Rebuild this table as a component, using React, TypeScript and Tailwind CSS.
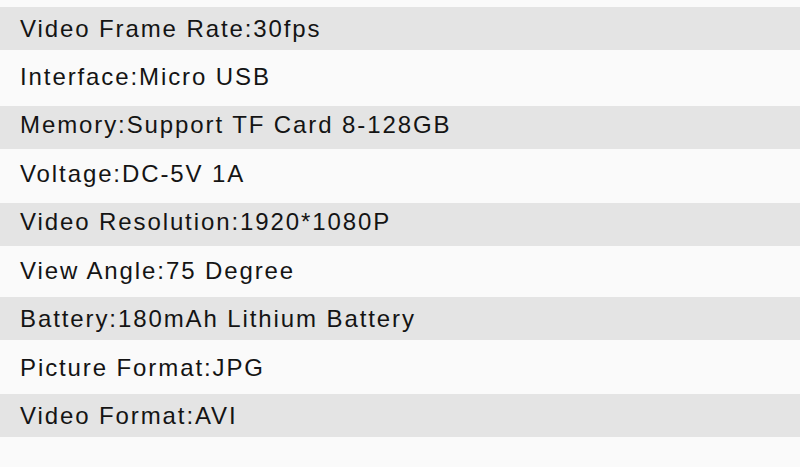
// spec rows, top to bottom; the source image's stripes aren't perfectly even,
// so each row carries its own height and a small nudge for the text
const specs = [
  { text: "Video Frame Rate:30fps", cls: "h-[43px] bg-[#e4e4e4]" },
  { text: "Interface:Micro USB", cls: "h-[56px] pb-[3px]" },
  { text: "Memory:Support TF Card 8-128GB", cls: "h-[43px] bg-[#e4e4e4] pb-[5px]" },
  { text: "Voltage:DC-5V 1A", cls: "h-[54px] pb-[5px]" },
  { text: "Video Resolution:1920*1080P", cls: "h-[43px] bg-[#e4e4e4] pb-[5px]" },
  { text: "View Angle:75 Degree", cls: "h-[51px] pb-[2px]" },
  { text: "Battery:180mAh Lithium Battery", cls: "h-[43px] bg-[#e4e4e4] pt-[1px]" },
  { text: "Picture Format:JPG", cls: "h-[54px] pt-[1px]" },
  { text: "Video Format:AVI", cls: "h-[43px] bg-[#e4e4e4] pt-[1px]" },
];

export default function App() {
  return (
    <div className="h-[467px] w-[800px] bg-[#fafafa] pt-[7px] font-['Liberation_Sans',Arial,sans-serif] text-[#141414]">
      {specs.map((row) => (
        <div
          key={row.text}
          className={`flex items-center pl-[20px] text-[24px] tracking-[1.9px] ${row.cls}`}
        >
          {row.text}
        </div>
      ))}
    </div>
  );
}
